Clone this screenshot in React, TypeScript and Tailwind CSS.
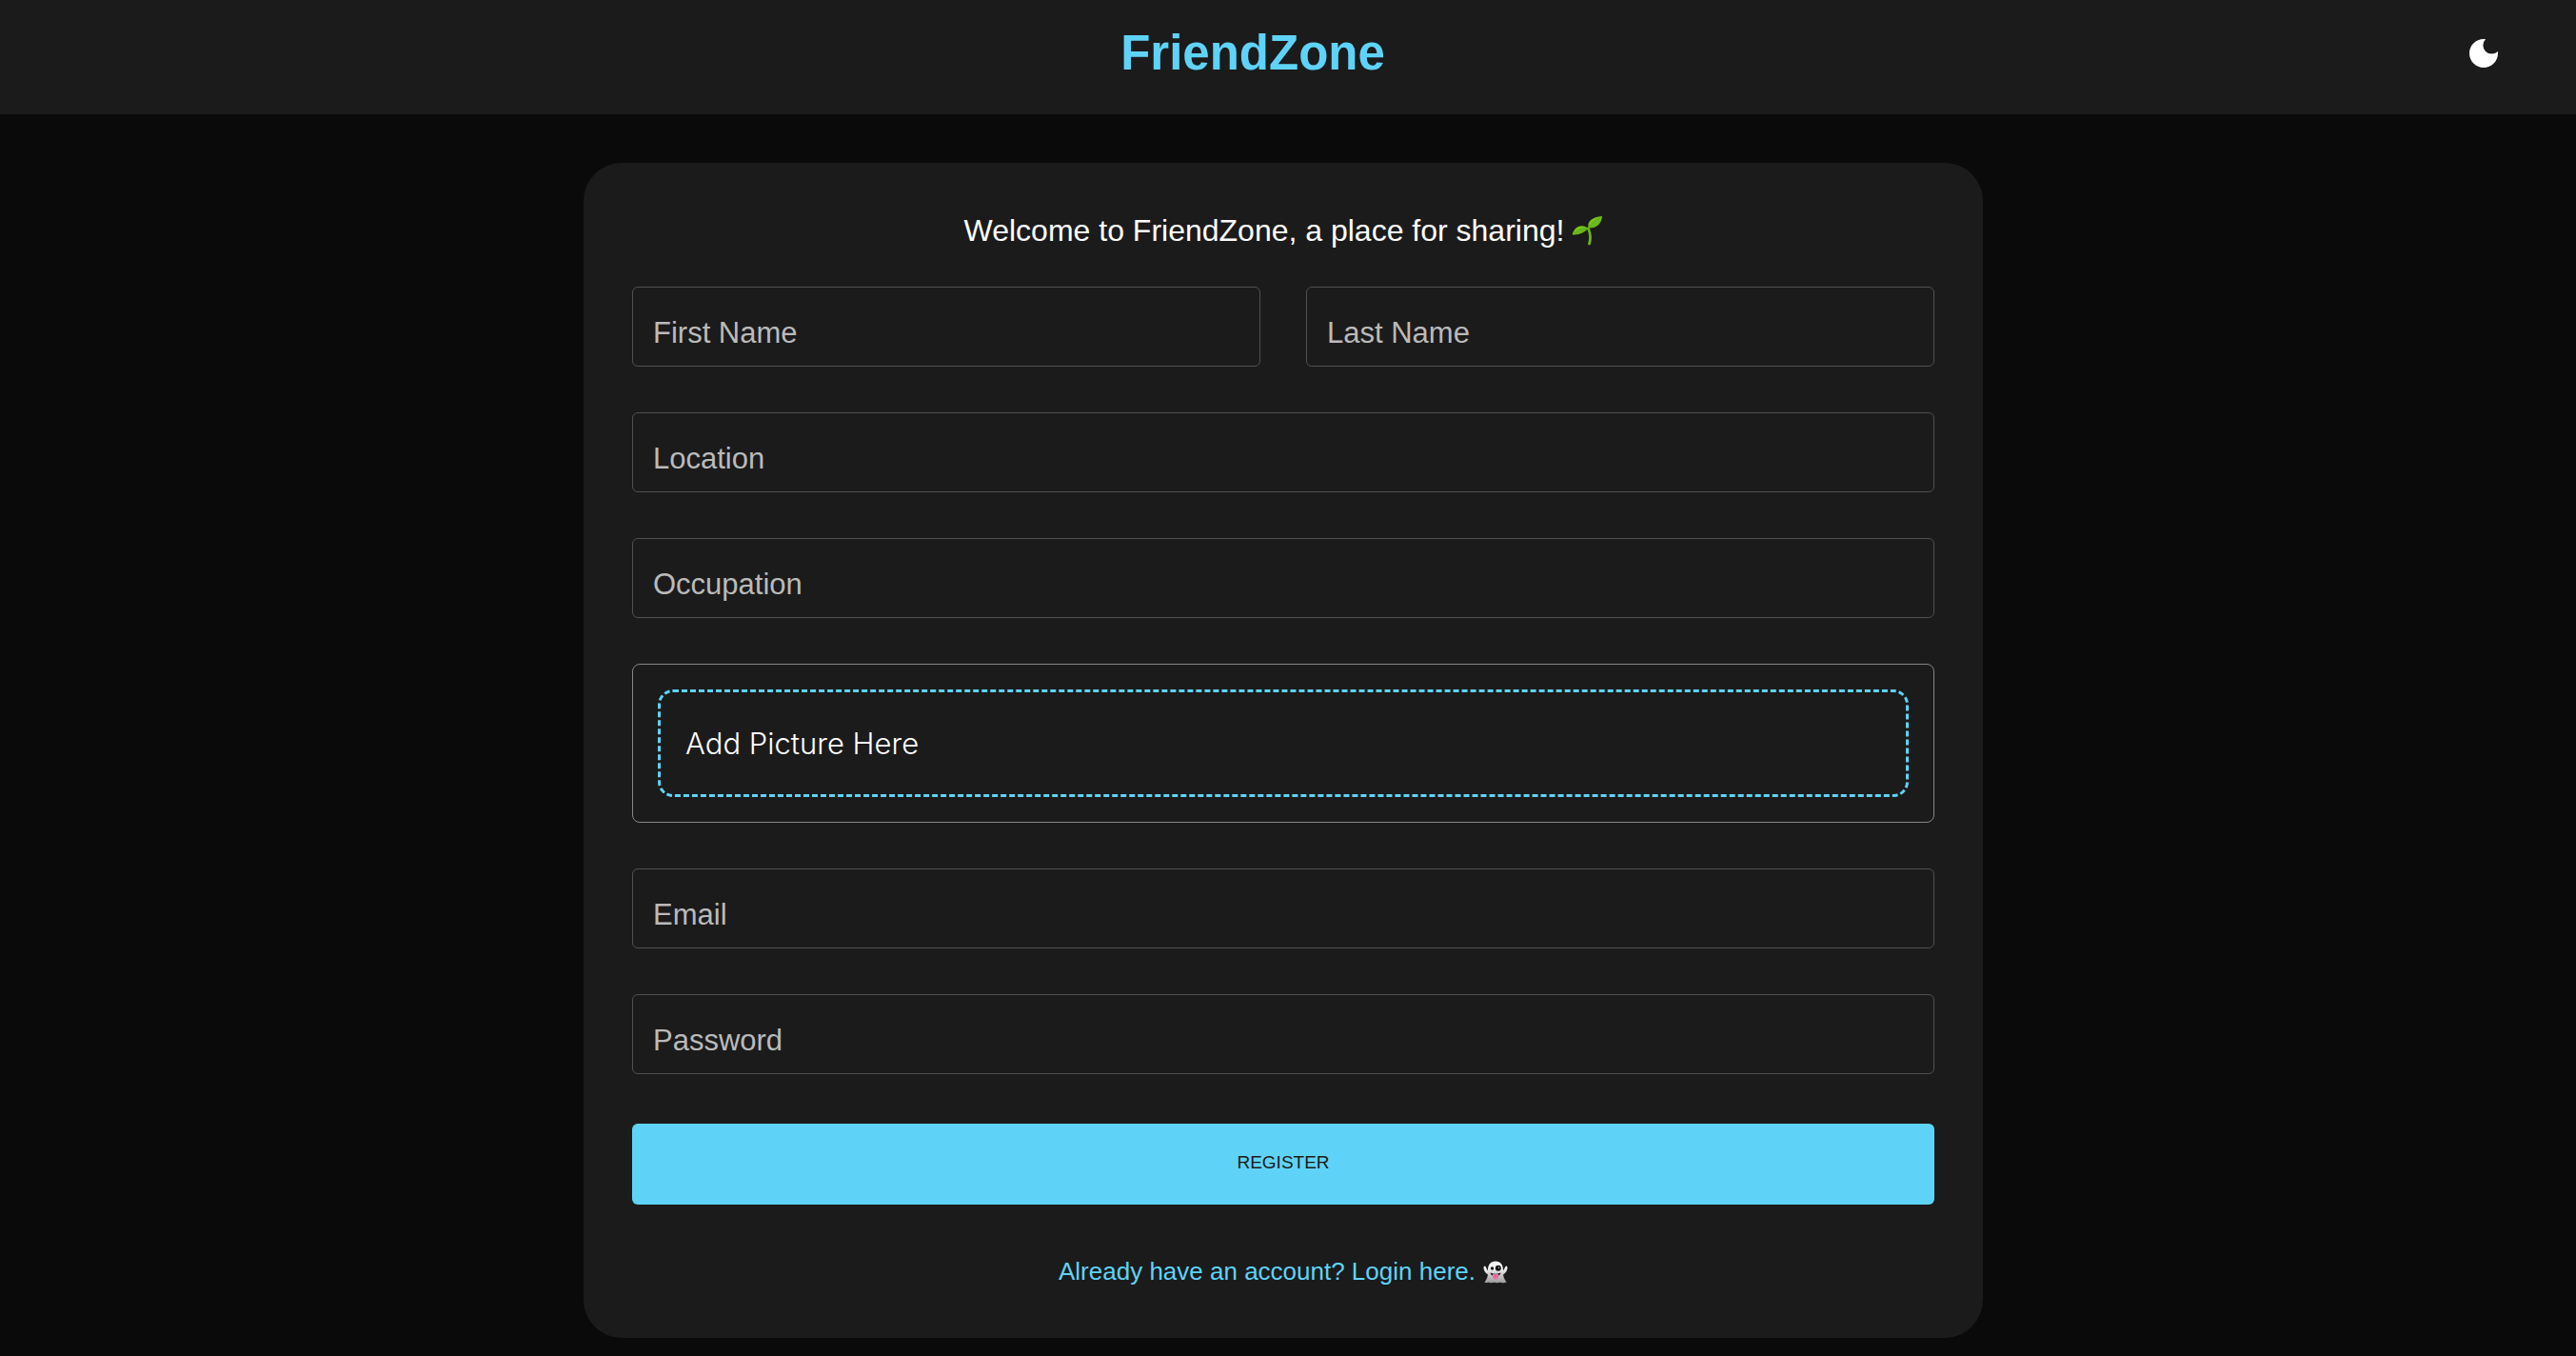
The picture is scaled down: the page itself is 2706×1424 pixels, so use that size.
import React, { useState } from "react";

type FieldProps = { id: string; label: string; type?: string; wide?: boolean };

function Field({ id, label, type = "text", wide = true }: FieldProps) {
  return (
    <input
      id={id}
      name={id}
      type={type}
      aria-label={label}
      placeholder={label}
      className={
        (wide ? "col-span-2 " : "") +
        "h-[84px] w-full min-w-0 rounded-md border border-[#505050] bg-transparent px-[21px] pt-3.5 text-[31px] text-white outline-none placeholder:text-[#bababa] placeholder:opacity-100 focus:border-[#5fd3f7]"
      }
    />
  );
}

function Sprout() {
  return (
    <svg viewBox="0 0 32 32" className="h-8 w-8" aria-hidden="true">
      <defs>
        <linearGradient id="leaf" x1="0" y1="0" x2="1" y2="1">
          <stop offset="0" stopColor="#86cf25" />
          <stop offset="1" stopColor="#5cab14" />
        </linearGradient>
      </defs>
      <path d="M17.500 14Q21 22 18.500 30" fill="none" stroke="#68b41c" strokeWidth="2.800" strokeLinecap="round" />
      <path d="M17.500 13.500C16 6 22 2 32 1C31.500 9 26 14 17.500 13.500Z" fill="url(#leaf)" />
      <path d="M17.500 14C12 9 3 11 .5 20.500C7 20.500 12 19.500 17.500 14Z" fill="url(#leaf)" />
      <path d="M18 13Q23 6 30 3M16 14Q9 14 2.500 19" fill="none" stroke="#4c9612" strokeWidth="0.600" />
    </svg>
  );
}

function Ghost() {
  return (
    <svg viewBox="0 0 26 24" className="h-6 w-[26px]" aria-hidden="true">
      <defs>
        <linearGradient id="ghost" x1="0" y1="0" x2="0" y2="1">
          <stop offset="0.3" stopColor="#f4f4f4" />
          <stop offset="1" stopColor="#9a9a9a" />
        </linearGradient>
      </defs>
      <path
        d="M13 .5C7.500 .5 5 4.500 5 10C3.500 9.500 3.500 6 1.500 5.500C-.5 6 .5 12 5 14.500C4.500 18 3 20 1.500 22.500C3.500 24 5 22 7 23C9 24 11 22 13 23C15 24 17 22 19 23C21 24 23 22.500 24.500 22.500C23 20 21.500 18 21 14.500C25.500 12 26.500 6 24.500 5.500C22.500 6 22.500 9.500 21 10C21 4.500 18.500 .5 13 .5Z"
        fill="url(#ghost)"
      />
      <circle cx="9.500" cy="8" r="1.700" fill="#151515" />
      <circle cx="15.800" cy="7.800" r="3" fill="#151515" />
      <circle cx="16.400" cy="7.200" r="0.700" fill="#bbb" />
      <path d="M7.500 12.500Q13 15 18.500 12.500Q18 16 13 16Q8 16 7.500 12.500Z" fill="#151515" />
      <path d="M10 14H16V16.500Q16 19.500 13 19.500Q10 19.500 10 16.500Z" fill="#f06fa0" />
      <path d="M13 14.500V17.500" stroke="#c94478" strokeWidth="0.600" />
    </svg>
  );
}

export default function App() {
  const [picture, setPicture] = useState("Add Picture Here");

  return (
    <div className="min-h-screen bg-[#0a0a0a] font-['Liberation_Sans',Arial,sans-serif] text-white">
      <header className="grid h-[120px] grid-cols-[1fr_auto_1fr] items-start bg-[#1b1b1b] pt-[29px] pr-[82px] pl-2">
        <h1 className="col-start-2 text-[51px] leading-[54px] font-bold text-[#5fd3f7]">FriendZone</h1>
        <button type="button" aria-label="Toggle colour mode" className="mt-3 justify-self-end">
          <svg viewBox="0 0 30 30" className="h-[30px] w-[30px]" fill="white" aria-hidden="true">
            <path d="M15 0C6.700 0 0 6.700 0 15S6.700 30 15 30S30 23.300 30 15C30 14.300 29.950 13.600 29.850 12.950A9 9 0 1 1 17 .15C16.400 .05 15.700 0 15 0Z" />
          </svg>
        </button>
      </header>

      <main className="flex justify-center py-[51px] pr-[10px] pb-[19px]">
        <section className="w-[1470px] max-w-full rounded-[40px] bg-[#1b1b1b] px-[51px] pt-[51px]">
          <h2 className="flex items-center justify-center gap-2 text-[32px] leading-10">
            Welcome to FriendZone, a place for sharing! <Sprout />
          </h2>

          <form className="mt-[39px]" onSubmit={(e) => e.preventDefault()}>
            <div className="grid grid-cols-2 gap-12">
              <Field id="firstName" label="First Name" wide={false} />
              <Field id="lastName" label="Last Name" wide={false} />
              <Field id="location" label="Location" />
              <Field id="occupation" label="Occupation" />
              <div className="col-span-2 rounded-lg border border-[#878787] p-[26px]">
                <label className="flex h-[113px] cursor-pointer items-center rounded-2xl border-3 border-dashed border-[#5fd3f7] px-[26px] pt-px [font-family:Inter,sans-serif] text-[31px] font-light">
                  {picture}
                  <input
                    type="file"
                    accept="image/*"
                    className="sr-only"
                    onChange={(e) => setPicture(e.target.files?.[0]?.name ?? "Add Picture Here")}
                  />
                </label>
              </div>
              <Field id="email" label="Email" type="email" />
              <Field id="password" label="Password" type="password" />
            </div>

            <button
              type="submit"
              className="mt-[52px] h-[85px] w-full rounded-md bg-[#5fd3f7] pb-0.5 text-[19px] text-[#1b1b1b] uppercase"
            >
              Register
            </button>
          </form>

          <div className="flex justify-center pt-[53px] pb-[52px]">
            <a href="#login" className="flex items-center gap-2 text-[26px] leading-[35px] text-[#5fd3f7]">
              Already have an account? Login here. <Ghost />
            </a>
          </div>
        </section>
      </main>
    </div>
  );
}
